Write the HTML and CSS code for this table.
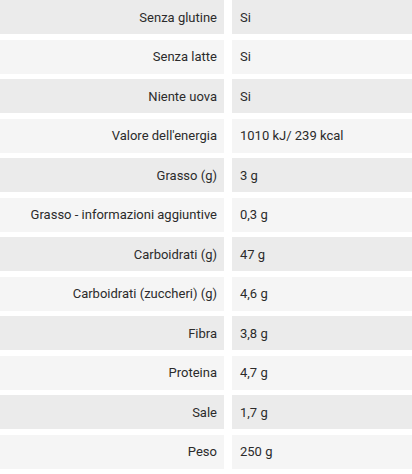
FILE: index.html
```html
<!DOCTYPE html>
<html lang="it">
<head>
<meta charset="utf-8">
<link rel="stylesheet" href="styles.css">
</head>
<body>
<div class="specs">
  <div class="row dark"><div class="label">Senza glutine</div><div class="value">Si</div></div>
  <div class="row light"><div class="label">Senza latte</div><div class="value">Si</div></div>
  <div class="row dark"><div class="label">Niente uova</div><div class="value">Si</div></div>
  <div class="row light"><div class="label">Valore dell'energia</div><div class="value">1010 kJ/ 239 kcal</div></div>
  <div class="row dark"><div class="label">Grasso (g)</div><div class="value">3 g</div></div>
  <div class="row light"><div class="label">Grasso - informazioni aggiuntive</div><div class="value">0,3 g</div></div>
  <div class="row dark"><div class="label">Carboidrati (g)</div><div class="value">47 g</div></div>
  <div class="row light"><div class="label">Carboidrati (zuccheri) (g)</div><div class="value">4,6 g</div></div>
  <div class="row dark"><div class="label">Fibra</div><div class="value">3,8 g</div></div>
  <div class="row light"><div class="label">Proteina</div><div class="value">4,7 g</div></div>
  <div class="row dark"><div class="label">Sale</div><div class="value">1,7 g</div></div>
  <div class="row light"><div class="label">Peso</div><div class="value">250 g</div></div>
</div>
</body>
</html>
```
FILE: styles.css
```css
html, body {
  margin: 0;
  padding: 0;
  background: #ffffff;
}
body {
  font-family: Roboto, "Liberation Sans", sans-serif;
  font-size: 13px;
  color: #2b2b2b;
}
.specs {
  display: flex;
  flex-direction: column;
  gap: 5.5px;
}
.row {
  display: grid;
  grid-template-columns: 224px 1fr;
  column-gap: 8px;
  height: 34px;
}
.label, .value {
  display: flex;
  align-items: center;
}
.label {
  justify-content: flex-end;
  padding-right: 7px;
}
.value {
  padding-left: 8px;
}
.dark .label, .dark .value { background: #ebebeb; }
.light .label, .light .value { background: #f5f5f5; }
```
